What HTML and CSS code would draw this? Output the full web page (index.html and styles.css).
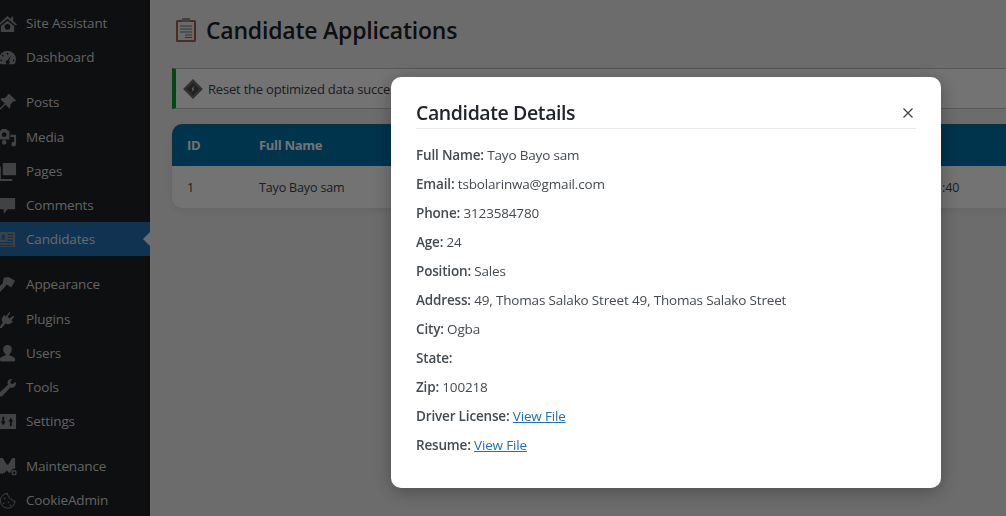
FILE: index.html
```html
<!DOCTYPE html>
<html lang="en">
<head>
  <meta charset="UTF-8">
  <title>Candidate Applications</title>
  <link rel="stylesheet" href="styles.css">
</head>
<body>
  <div class="layout">
    <nav class="sidebar">
      <ul class="menu">
        <li><svg class="ico" viewBox="0 0 20 20"><path d="M10 2 0 11l1.500 1L10 5l8.500 7 1.500-1-4-3.600V3h-2v2.600zM3 12.500V19h14v-6.500L10 7zM10 10.500a3 3 0 1 1 0 6 3 3 0 0 1 0-6z" fill-rule="evenodd"/></svg>Site Assistant</li>
        <li><svg class="ico" viewBox="0 0 20 20"><path d="M10 3a9 9 0 0 0-9 9c0 2 .7 3.800 1.800 5h14.400a8.900 8.900 0 0 0 1.800-5 9 9 0 0 0-9-9zm0 2a1 1 0 1 1 0 2 1 1 0 0 1 0-2zM5 7a1 1 0 1 1 0 2 1 1 0 0 1 0-2zm-1.500 5a1 1 0 1 1 0 2 1 1 0 0 1 0-2zm13 0a1 1 0 1 1 0 2 1 1 0 0 1 0-2zM14 7.500l-2.500 6a2 2 0 1 1-1.500-.5z" fill-rule="evenodd"/></svg>Dashboard</li>
        <li class="gap extra"><svg class="ico" viewBox="0 0 20 20"><path d="M12 1l7 7-1.500 1-1-.5-3.500 3.500c.5 2 0 3.500-1 4.500L8 12l-6 6-2 1 1-2 6-6-4.500-4.500c1-1 2.500-1.500 4.500-1l3.500-3.500-.5-1z"/></svg>Posts</li>
        <li><svg class="ico" viewBox="0 0 20 20"><path d="M1 3h2l1-2h5l1 2h2v9H1zm5.500 1.500a2.500 2.500 0 1 0 0 5 2.500 2.500 0 0 0 0-5zM13 7h6v10a2.500 2.500 0 1 1-2-2.400V9.500h-4zM9 15a2.500 2.500 0 1 1-5 0 2.500 2.500 0 0 1 5 0z" fill-rule="evenodd"/></svg>Media</li>
        <li><svg class="ico" viewBox="0 0 20 20"><path d="M5 1h14v13H5zM1 5h2v13h12v2H1z"/></svg>Pages</li>
        <li><svg class="ico" viewBox="0 0 20 20"><path d="M1 2h17v12h-8l-4 5v-5H1z"/></svg>Comments</li>
        <li class="active"><svg class="ico" viewBox="0 0 20 20"><path d="M0 2h18v16H0zM3 4v6h5c-.5-1-1.500-1.500-1.500-1.500a2 2 0 1 0-2 0S3.500 9 3 10zm7 0v1.500h6V4zm0 3v1.500h6V7zm0 3v1.500h6V10zm-8 2.500V14h14v-1.500zm0 3V17h14v-1.500z" fill-rule="evenodd"/></svg>Candidates</li>
        <li class="gap extra"><svg class="ico" viewBox="0 0 20 20"><path d="M6 3l5-1 7 4-4 7-5-3-2 3-6 6-1-1 0-5 5-4z"/></svg>Appearance</li>
        <li><svg class="ico" viewBox="0 0 20 20"><path d="M12 2l1 1-3 4 2 2 4-3 1 1-3 4 2 1-1 1c-2 2-5 3-7 1l-4 5H1l4-6c-2-2-1-5 1-7l1-1 1 2z"/></svg>Plugins</li>
        <li><svg class="ico" viewBox="0 0 20 20"><path d="M10 1a4.500 4.500 0 0 1 4.500 5c0 2-1.500 4-2.500 4.500v1.500c3 .5 6 2 6 4v1a2 2 0 0 1-2 1.500H4a2 2 0 0 1-2-1.500v-1c0-2 3-3.500 6-4v-1.500C7 10 5.500 8 5.500 6A4.500 4.500 0 0 1 10 1z"/></svg>Users</li>
        <li><svg class="ico" viewBox="0 0 20 20"><path d="M14 1c-2.500 0-4 2-4 4l.5 2-9 8.500c-1 1 0 3 .5 3.500s2 1 3-.5L13 10c3 1 6-1 6-5l-.5-1-3 2.500-2.500-1 .5-3 2-1.500z"/></svg>Tools</li>
        <li><svg class="ico" viewBox="0 0 20 20"><path d="M1 2h18v16H1zM4.500 5v5H3l2.500 4 2.500-4H6.500V5zm8 10h2v-5H16l-2.500-4-2.500 4h1.500z" fill-rule="evenodd"/></svg>Settings</li>
        <li class="gap"><svg class="ico" viewBox="0 0 20 20"><path d="M1 1h4l4 7 2 0 4-7h3v11a4 4 0 0 0-4 3l-1 1-1 1-1-1-2-2-2 3-1-1-1 2-2-1-1 1-1-1z"/><circle cx="17" cy="16.500" r="2" fill="none" stroke="#8f9295" stroke-width="1.400"/></svg>Maintenance</li>
        <li><svg class="ico cookie" viewBox="0 0 20 20"><path d="M10 2.500a7.800 7.800 0 1 0 8 8c-2 .5-3.500-.5-3.500-2-2 0-3.500-1.500-3-3-1.500 0-2-2-1.500-3z"/><circle cx="7" cy="8" r=".5"/><circle cx="6" cy="13" r=".5"/><circle cx="11" cy="12" r=".5"/><circle cx="13" cy="15" r=".5"/></svg>CookieAdmin</li>
      </ul>
    </nav>

    <main class="content">
      <h1 class="page-title">
        <svg class="clipboard" viewBox="0 0 22 26">
          <rect x="1" y="3" width="20" height="22" rx="1.500" fill="#a8644e"/>
          <rect x="3" y="5" width="16" height="18" fill="#ececec"/>
          <rect x="7" y="1" width="8" height="4" rx="1" fill="#8a8f94"/>
          <path d="M5 9h12M5 12h12M5 15h12M10 18h7M10 20.500h7" stroke="#70757a" stroke-width="1"/>
        </svg>
        Candidate Applications
      </h1>

      <div class="notice">
        <svg class="notice-icon" viewBox="0 0 22 22">
          <rect x="4" y="4" width="14" height="14" transform="rotate(45 11 11)" fill="#6e6e6e"/>
          <rect x="6.500" y="6.500" width="9" height="9" transform="rotate(45 11 11)" fill="#4a4a4a"/>
          <path d="M12 8.500 10 11h2l-2 2.500" stroke="#e0e0e0" stroke-width="1" fill="none"/>
        </svg>
        Reset the optimized data successfully
      </div>

      <div class="table">
        <div class="row head">
          <div class="cell-id">ID</div>
          <div class="cell-name">Full Name</div>
        </div>
        <div class="row">
          <div class="cell-id">1</div>
          <div class="cell-name">Tayo Bayo sam</div>
          <div class="cell-date">:40</div>
        </div>
      </div>
    </main>
  </div>

  <div class="overlay">
    <div class="modal">
      <div class="modal-head">
        <h2>Candidate Details</h2>
        <svg class="close" viewBox="0 0 10 10"><path d="M.5.500l9 9M9.500.500l-9 9"/></svg>
      </div>
      <p><strong>Full Name:</strong> Tayo Bayo sam</p>
      <p><strong>Email:</strong> tsbolarinwa@gmail.com</p>
      <p><strong>Phone:</strong> 3123584780</p>
      <p><strong>Age:</strong> 24</p>
      <p><strong>Position:</strong> Sales</p>
      <p><strong>Address:</strong> 49, Thomas Salako Street 49, Thomas Salako Street</p>
      <p><strong>City:</strong> Ogba</p>
      <p><strong>State:</strong></p>
      <p><strong>Zip:</strong> 100218</p>
      <p><strong>Driver License:</strong> <a href="#">View File</a></p>
      <p><strong>Resume:</strong> <a href="#">View File</a></p>
    </div>
  </div>
</body>
</html>
```

FILE: styles.css
```css
html, body {
  height: 100%;
}

body {
  margin: 0;
  overflow: hidden;
  font-family: "Open Sans", "Noto Sans", sans-serif;
  font-size: 13.500px;
  background: #f0f0f1;
  color: #3c434a;
}

.layout {
  display: flex;
  height: 516px;
}

.sidebar {
  width: 150px;
  flex: none;
  background: #1d2327;
  padding-top: 6px;
}

.menu {
  list-style: none;
  margin: 0;
  padding: 0;
}

.menu li {
  position: relative;
  display: flex;
  align-items: center;
  height: 34px;
  color: #d8d9da;
  white-space: nowrap;
  letter-spacing: -0.150px;
}

.menu li.gap {
  margin-top: 11px;
}

.menu li.extra {
  margin-bottom: 1px;
}

.menu li.active {
  background: #2271b1;
  color: #e8e8e8;
}

.menu li.active::after {
  content: "";
  position: absolute;
  right: 0;
  top: 10px;
  border: 7px solid transparent;
  border-right-color: #f0f0f1;
  border-left: 0;
}

.ico {
  width: 19px;
  height: 19px;
  margin: 0 9px 0 -2px;
  flex: none;
  fill: #8f9295;
}

.ico.cookie {
  fill: none;
  stroke: #8f9295;
  stroke-width: 1;
}

.content {
  flex: 1;
  min-width: 0;
  padding: 0 0 0 22px;
}

.page-title {
  display: flex;
  align-items: center;
  gap: 9px;
  margin: 14px 0 22px;
  height: 32px;
  font-size: 23px;
  font-weight: 600;
  color: #1d2327;
  letter-spacing: -0.220px;
}

.clipboard {
  width: 22px;
  height: 26px;
  margin-left: 3px;
}

.notice {
  display: flex;
  align-items: center;
  gap: 4px;
  height: 39px;
  margin-right: -20px;
  padding-left: 6px;
  background: #fff;
  border: 1px solid #c3c4c7;
  border-left: 4px solid #00a32a;
  border-right: 0;
  color: #3c434a;
  font-size: 13px;
  letter-spacing: -0.200px;
  white-space: nowrap;
}

.notice-icon {
  width: 22px;
  height: 22px;
}

.table {
  margin: 15px -20px 0 0;
  background: #fff;
  border-radius: 10px;
  overflow: hidden;
  box-shadow: 0 2px 8px rgba(0, 0, 0, 0.08);
}

.row {
  display: flex;
  align-items: center;
  height: 42px;
  padding-left: 15px;
  color: #3c434a;
  font-size: 12.500px;
  letter-spacing: -0.150px;
}

.row.head {
  background: #0073aa;
  color: #fff;
  font-weight: 700;
  font-size: 13px;
  letter-spacing: -0.300px;
}

.cell-id {
  width: 72px;
}

.cell-name {
  width: 683px;
}

.overlay {
  position: fixed;
  inset: 0;
  background: rgba(0, 0, 0, 0.55);
}

.modal {
  box-sizing: border-box;
  width: 550px;
  height: 411px;
  margin: 77px 0 0 391px;
  padding: 20px 25px;
  background: #fff;
  border-radius: 10px;
  box-shadow: 0 4px 20px rgba(0, 0, 0, 0.3);
  overflow: hidden;
}

.modal-head {
  display: flex;
  align-items: center;
  justify-content: space-between;
  height: 31px;
  border-bottom: 1px solid #e9ecef;
  margin-bottom: 16px;
}

.modal-head h2 {
  margin: 0;
  font-size: 19.500px;
  font-weight: 600;
  color: #212529;
  line-height: 30px;
  letter-spacing: -0.400px;
}

.modal p {
  margin: 0 0 8px;
  line-height: 21px;
  color: #444a50;
  white-space: nowrap;
  letter-spacing: -0.170px;
}

.modal strong {
  font-weight: 600;
}

.modal a {
  color: #2271b1;
}

.close {
  width: 10px;
  height: 10px;
  margin-right: 3px;
  margin-top: 1px;
  stroke: #3c434a;
  stroke-width: 1.300;
}
```
